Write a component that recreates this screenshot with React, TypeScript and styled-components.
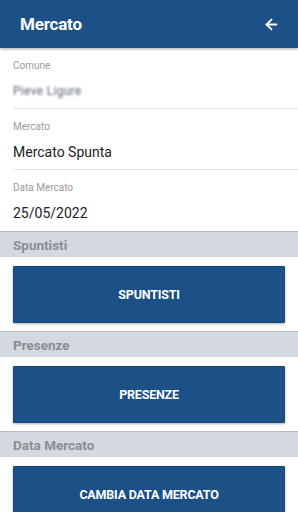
import React from "react";
import styled, { createGlobalStyle } from "styled-components";
import { ArrowLeft } from "lucide-react";

const GlobalStyle = createGlobalStyle`
  html, body { margin: 0; padding: 0; background: #ffffff; }
  body { font-family: Roboto, "Noto Sans", "Liberation Sans", sans-serif; }
  * { box-sizing: border-box; }
`;

const Page = styled.div`
  width: 298px;
  display: flex;
  flex-direction: column;
  background: #ffffff;
  overflow: hidden;
`;

const Header = styled.header`
  height: 48px;
  background: #1b5186;
  display: flex;
  align-items: center;
  justify-content: space-between;
  padding: 0 18px 0 20px;
  box-shadow: 0 1px 3px rgba(0, 0, 0, 0.35);
  position: relative;
  z-index: 1;
`;

const Title = styled.h1`
  margin: 0;
  color: #ffffff;
  font-size: 17px;
  font-weight: 700;
  letter-spacing: -0.2px;
`;

const BackButton = styled.button`
  background: none;
  border: none;
  padding: 0;
  color: #ffffff;
  display: flex;
  align-items: center;
  cursor: pointer;
`;

const Field = styled.div<{ $last?: boolean }>`
  margin-left: 13px;
  padding: 12px 0 6px;
  display: flex;
  flex-direction: column;
  gap: 9px;
  border-bottom: 1px solid ${(p) => (p.$last ? "transparent" : "#e2e2e2")};
`;

const Label = styled.span`
  font-size: 10px;
  line-height: 12px;
  color: #9a9a9a;
`;

const Value = styled.span<{ $blurred?: boolean }>`
  font-size: 14px;
  line-height: 21px;
  color: #222222;
  ${(p) =>
    p.$blurred &&
    `
    color: #5d6675;
    filter: blur(1.3px);
    font-size: 12px;
    letter-spacing: 0.3px;
  `}
`;

const Band = styled.div`
  height: 26px;
  background: #d4d8e1;
  border-top: 1px solid #b4bac4;
  display: flex;
  align-items: center;
  padding-left: 13px;
  font-size: 13.5px;
  font-weight: 700;
  color: #8b8d91;
`;

const ActionButton = styled.button`
  margin: 9px 13px 8px;
  height: 57px;
  background: #1b5186;
  border: 1px solid #164677;
  border-radius: 1px;
  box-shadow: 0 1px 3px rgba(0, 0, 0, 0.3);
  color: #ffffff;
  font-family: Roboto, "Noto Sans", "Liberation Sans", sans-serif;
  font-size: 12.5px;
  font-weight: 700;
  text-transform: uppercase;
  letter-spacing: -0.2px;
  cursor: pointer;
`;

const fields = [
  { label: "Comune", value: "Pieve Ligure", blurred: true },
  { label: "Mercato", value: "Mercato Spunta" },
  { label: "Data Mercato", value: "25/05/2022" },
];

const sections = [
  { title: "Spuntisti", action: "Spuntisti" },
  { title: "Presenze", action: "Presenze" },
  { title: "Data Mercato", action: "Cambia data mercato" },
];

export default function App() {
  return (
    <Page>
      <GlobalStyle />
      <Header>
        <Title>Mercato</Title>
        <BackButton aria-label="Indietro">
          <ArrowLeft size={17} strokeWidth={2.6} />
        </BackButton>
      </Header>
      {fields.map((f, i) => (
        <Field key={f.label} $last={i === fields.length - 1}>
          <Label>{f.label}</Label>
          <Value $blurred={f.blurred}>{f.value}</Value>
        </Field>
      ))}
      {sections.map((s) => (
        <React.Fragment key={s.title}>
          <Band>{s.title}</Band>
          <ActionButton>{s.action}</ActionButton>
        </React.Fragment>
      ))}
    </Page>
  );
}
